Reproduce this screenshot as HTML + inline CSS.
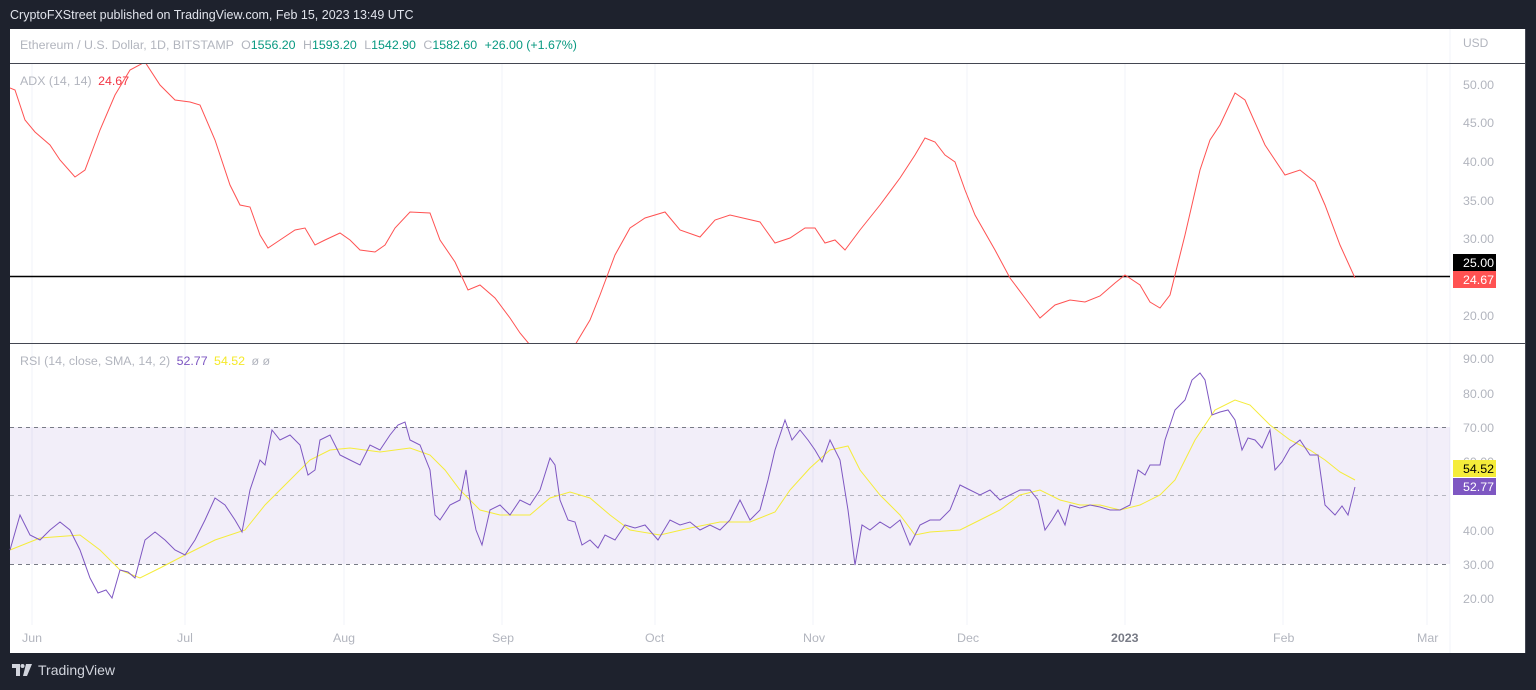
<!DOCTYPE html>
<html><head><meta charset="utf-8"><style>
html,body{margin:0;padding:0;background:#1e222d;width:1536px;height:690px;overflow:hidden;font-family:"Liberation Sans",sans-serif}
.top{position:absolute;left:10px;top:8px;color:#e0e3eb;font-size:12.5px}
.bot{position:absolute;left:12px;top:662px;color:#d1d4dc;font-size:14px;display:flex;align-items:center;gap:6px}
svg{position:absolute;left:0;top:0}
</style></head><body>
<div class="top">CryptoFXStreet published on TradingView.com, Feb 15, 2023 13:49 UTC</div>
<svg width="1536" height="690" font-family="Liberation Sans, sans-serif">
<rect x="10" y="29" width="1515" height="624" fill="#fff"/>
<g stroke="#f0f3fa" stroke-width="1">
<line x1="32" y1="63" x2="32" y2="625"/><line x1="185" y1="63" x2="185" y2="625"/><line x1="344" y1="63" x2="344" y2="625"/><line x1="502" y1="63" x2="502" y2="625"/><line x1="655" y1="63" x2="655" y2="625"/><line x1="813" y1="63" x2="813" y2="625"/><line x1="967" y1="63" x2="967" y2="625"/><line x1="1125" y1="63" x2="1125" y2="625"/><line x1="1283" y1="63" x2="1283" y2="625"/><line x1="1427" y1="63" x2="1427" y2="625"/>
<line x1="1450" y1="29" x2="1450" y2="653"/>
</g>
<line x1="10" y1="63.5" x2="1525" y2="63.5" stroke="#434651" stroke-width="1"/>
<line x1="10" y1="343.5" x2="1525" y2="343.5" stroke="#434651" stroke-width="1"/>
<text x="20" y="49" font-size="12.4" fill="#b2b5be">Ethereum / U.S. Dollar, 1D, BITSTAMP <tspan dx="4">O</tspan><tspan fill="#089981">1556.20</tspan> <tspan dx="4">H</tspan><tspan fill="#089981">1593.20</tspan> <tspan dx="4">L</tspan><tspan fill="#089981">1542.90</tspan> <tspan dx="4">C</tspan><tspan fill="#089981">1582.60</tspan> <tspan dx="4" fill="#089981">+26.00 (+1.67%)</tspan></text>
<text x="1463" y="47" font-size="12" fill="#b2b5be">USD</text>
<text x="20" y="85" font-size="12.4" fill="#b2b5be">ADX (14, 14) <tspan fill="#f23645" dx="3">24.67</tspan></text>
<g font-size="12.4" fill="#b2b5be">
<text x="1463" y="89">50.00</text><text x="1463" y="127">45.00</text><text x="1463" y="166">40.00</text><text x="1463" y="205">35.00</text><text x="1463" y="243">30.00</text><text x="1463" y="320">20.00</text>
<text x="1463" y="363">90.00</text><text x="1463" y="398">80.00</text><text x="1463" y="432">70.00</text><text x="1463" y="466">60.00</text><text x="1463" y="535">40.00</text><text x="1463" y="569">30.00</text><text x="1463" y="603">20.00</text>
</g>
<line x1="10" y1="276.5" x2="1450" y2="276.5" stroke="#000" stroke-width="1.5"/>
<rect x="1453" y="254" width="43" height="17" fill="#000"/><text x="1463" y="267" font-size="12.4" fill="#fff">25.00</text>
<rect x="1453" y="271" width="43" height="17" fill="#ff5252"/><text x="1463" y="284" font-size="12.4" fill="#fff">24.67</text>
<clipPath id="c1"><rect x="10" y="64" width="1440" height="279"/></clipPath>
<polyline clip-path="url(#c1)" fill="none" stroke="#ff5252" stroke-width="1" points="10,88 15,90 25,120 35,132 50,145 60,160 75,177 85,170 100,130 115,95 130,70 145,62 160,85 175,100 190,102 200,105 215,140 230,185 240,205 250,207 260,235 268,248 280,240 295,230 305,228 315,245 325,240 340,233 350,240 360,250 375,252 385,245 395,228 410,212 430,213 440,240 455,262 468,290 480,285 495,298 510,318 520,333 530,345 575,345 590,320 600,295 615,255 630,228 645,218 665,212 680,230 700,237 715,220 730,215 760,222 775,243 790,238 805,228 815,228 825,243 835,240 845,250 860,230 880,205 900,178 915,155 925,138 935,142 945,155 955,162 965,190 975,215 995,250 1010,278 1025,298 1040,318 1055,305 1070,300 1085,302 1100,296 1115,283 1125,275 1140,285 1150,302 1160,308 1170,295 1185,235 1200,170 1210,140 1220,125 1235,93 1245,100 1265,145 1285,175 1300,170 1315,182 1325,205 1340,245 1355,278"/>
<rect x="10" y="427" width="1440" height="137" fill="#7e57c2" fill-opacity="0.1"/>
<g stroke="#787b86" stroke-dasharray="4,4" stroke-width="1">
<line x1="10" y1="427.5" x2="1450" y2="427.5"/><line x1="10" y1="495.5" x2="1450" y2="495.5" stroke-opacity="0.5"/><line x1="10" y1="564.5" x2="1450" y2="564.5"/>
</g>
<text x="20" y="365" font-size="12.4" fill="#b2b5be">RSI (14, close, SMA, 14, 2) <tspan fill="#7e57c2" dx="3">52.77</tspan> <tspan fill="#f5e92a" dx="3">54.52</tspan> <tspan dx="3">ø ø</tspan></text>
<polyline fill="none" stroke="#f5ec3a" stroke-width="1" points="10,550 40,538 80,535 100,550 120,570 140,578 160,568 185,555 215,540 245,530 265,505 290,480 310,460 330,450 350,448 380,452 410,448 430,455 445,470 460,490 480,510 500,515 530,515 550,498 570,492 590,498 610,515 630,530 660,535 690,528 720,522 750,522 775,512 790,490 810,468 830,450 848,446 860,470 880,495 900,515 915,535 930,532 960,530 980,520 1000,510 1020,495 1040,490 1060,500 1080,505 1100,505 1120,510 1140,505 1160,495 1175,480 1195,440 1215,410 1235,400 1250,405 1270,425 1290,440 1310,450 1325,460 1340,472 1355,480"/>
<polyline fill="none" stroke="#7e57c2" stroke-width="1" points="10,550 20,515 30,535 40,540 50,530 60,522 70,530 80,550 90,578 98,593 106,590 112,598 120,570 128,572 135,578 145,540 155,532 165,540 175,550 185,555 195,540 205,520 215,498 225,505 235,520 242,532 250,490 260,460 265,465 272,430 280,440 290,435 300,445 308,475 315,470 320,440 330,435 340,455 350,460 360,465 370,445 380,450 390,435 398,425 405,422 410,440 420,445 430,470 435,515 440,520 450,505 460,500 466,470 470,500 476,530 482,545 490,510 500,505 510,515 520,500 530,505 540,490 550,458 555,465 560,500 568,520 575,522 582,545 590,540 598,548 605,535 615,540 625,525 635,528 645,525 658,540 670,520 680,525 690,522 700,530 710,525 720,530 730,520 740,500 750,520 760,510 768,480 775,450 785,420 792,440 800,430 808,440 815,450 822,462 830,440 840,460 848,510 855,565 862,525 870,530 880,522 890,528 900,520 910,545 920,525 930,520 940,520 950,510 960,485 970,490 980,495 990,490 1000,500 1010,495 1020,490 1030,490 1038,500 1045,530 1052,520 1058,510 1065,525 1070,505 1080,508 1090,505 1100,507 1110,510 1120,510 1130,505 1138,470 1145,475 1150,465 1160,465 1165,440 1175,410 1185,400 1192,380 1200,373 1205,380 1212,415 1220,412 1228,410 1235,420 1242,450 1248,438 1255,440 1262,448 1270,430 1275,470 1282,462 1290,448 1300,440 1310,455 1318,455 1325,505 1335,515 1342,506 1348,515 1355,487"/>
<rect x="1453" y="460" width="43" height="17" fill="#f5ec3a"/><text x="1463" y="473" font-size="12.4" fill="#000">54.52</text>
<rect x="1453" y="478" width="43" height="17" fill="#7e57c2"/><text x="1463" y="491" font-size="12.4" fill="#fff">52.77</text>
<g font-size="12.4" fill="#b2b5be">
<text x="22" y="642">Jun</text><text x="177" y="642">Jul</text><text x="333" y="642">Aug</text><text x="492" y="642">Sep</text><text x="645" y="642">Oct</text><text x="803" y="642">Nov</text><text x="957" y="642">Dec</text><text x="1111" y="642" font-weight="bold" fill="#787b86">2023</text><text x="1273" y="642">Feb</text><text x="1417" y="642">Mar</text>
</g>
<line x1="1525.5" y1="29" x2="1525.5" y2="653" stroke="#434651"/>
</svg>
<div class="bot"><svg width="20" height="12" viewBox="0 0 20 12" style="position:static"><path d="M0 0h8v12h-4v-8h-4z" fill="#d1d4dc"/><circle cx="10.5" cy="2" r="2" fill="#d1d4dc"/><path d="M14 0h6l-5 12h-4z" fill="#d1d4dc"/></svg><span>TradingView</span></div>
</body></html>
